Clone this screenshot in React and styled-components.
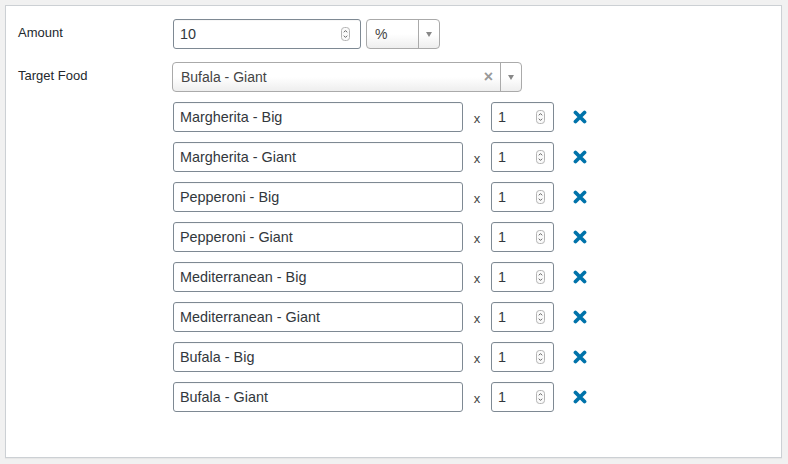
import React from "react";
import styled, { createGlobalStyle } from "styled-components";

const GlobalStyle = createGlobalStyle`
  html, body {
    margin: 0;
    padding: 0;
    background: #f1f1f1;
  }
  body {
    font-family: "Liberation Sans", Arial, sans-serif;
    font-size: 14px;
    color: #23282d;
  }
`;

const Page = styled.div`
  padding: 5px 6px 6px 5px;
`;

const Panel = styled.div`
  box-sizing: border-box;
  height: 453px;
  background: #fff;
  border: 1px solid #ccd0d4;
  box-shadow: 0 1px 1px rgba(0, 0, 0, 0.04);
  padding: 13px 12px;
`;

const FormRow = styled.div`
  display: grid;
  grid-template-columns: 155px 1fr;
  margin-bottom: ${(p) => p.$gap || 0}px;
`;

const Label = styled.div`
  padding-top: 5px;
  font-size: 13px;
  line-height: 18px;
  color: #23282d;
`;

const Fields = styled.div`
  display: flex;
  flex-direction: column;
  gap: 10px;
`;

const Inline = styled.div`
  display: flex;
  align-items: center;
  gap: ${(p) => p.$gap || 0}px;
`;

const InputBox = styled.div`
  box-sizing: border-box;
  width: ${(p) => p.$w}px;
  height: 30px;
  border: 1px solid #7e8993;
  border-radius: 3px;
  background: #fff;
  display: flex;
  align-items: center;
  padding: 0 ${(p) => p.$pr || 7}px 0 6px;
  font-size: 14.4px;
  color: #32373c;
  box-shadow: inset 0 1px 0 rgba(0, 0, 0, 0.03);
`;

const Value = styled.span`
  flex: 1;
  white-space: nowrap;
`;

const Spin = styled.svg`
  flex: none;
  width: 9px;
  height: 14px;
`;

const Select = styled.div`
  box-sizing: border-box;
  width: ${(p) => p.$w}px;
  height: 30px;
  margin-left: ${(p) => p.$shift || 0}px;
  border: 1px solid #aaa;
  border-radius: 4px;
  background: linear-gradient(to bottom, #fff 50%, #eee 100%);
  display: flex;
  align-items: stretch;
  font-size: 14px;
  color: #444;
`;

const SelectText = styled.span`
  flex: 1;
  display: flex;
  align-items: center;
  padding-left: 8px;
`;

const Clear = styled.span`
  display: flex;
  align-items: center;
  padding-right: 7px;
  font-size: 16px;
  font-weight: bold;
  color: #999;
`;

const Arrow = styled.span`
  flex: none;
  width: 20px;
  border-left: 1px solid #aaa;
  display: flex;
  align-items: center;
  justify-content: center;
  &::after {
    content: "";
    border-left: 3.5px solid transparent;
    border-right: 3.5px solid transparent;
    border-top: 5px solid #888;
  }
`;

const Times = styled.span`
  width: 28px;
  text-align: center;
  font-size: 13px;
  color: #444;
  padding-top: 2px;
`;

const Remove = styled.button`
  border: 0;
  background: none;
  padding: 0;
  margin-left: 19px;
  width: 14px;
  height: 14px;
  display: flex;
  cursor: pointer;
`;

const Spinner = () => (
  <Spin viewBox="0 0 9 14">
    <rect x="0.5" y="0.5" width="8" height="13" rx="3" fill="#fafafa" stroke="#b4b4b4" />
    <path d="M2.8 5.3 4.5 3.6 6.2 5.3M2.8 8.7 4.5 10.4 6.2 8.7" fill="none" stroke="#555" strokeWidth="0.9" />
  </Spin>
);

const RemoveIcon = () => (
  <svg width="14" height="14" viewBox="0 0 14 14">
    <path d="M2.5 2.5 11.5 11.5M11.5 2.5 2.5 11.5" stroke="#0073aa" strokeWidth="3.8" strokeLinecap="round" />
  </svg>
);

const items = [
  "Margherita - Big",
  "Margherita - Giant",
  "Pepperoni - Big",
  "Pepperoni - Giant",
  "Mediterranean - Big",
  "Mediterranean - Giant",
  "Bufala - Big",
  "Bufala - Giant",
];

export default function App() {
  return (
    <Page>
      <GlobalStyle />
      <Panel>
        <FormRow $gap={13}>
          <Label>Amount</Label>
          <Inline $gap={5}>
            <InputBox $w={188} $pr={10}>
              <Value>10</Value>
              <Spinner />
            </InputBox>
            <Select $w={74}>
              <SelectText>%</SelectText>
              <Arrow />
            </Select>
          </Inline>
        </FormRow>
        <FormRow>
          <Label>Target Food</Label>
          <Fields>
            <Select $w={350} $shift={-1}>
              <SelectText>Bufala - Giant</SelectText>
              <Clear>×</Clear>
              <Arrow />
            </Select>
            {items.map((name) => (
              <Inline key={name}>
                <InputBox $w={290}>
                  <Value>{name}</Value>
                </InputBox>
                <Times>x</Times>
                <InputBox $w={63} $pr={8}>
                  <Value>1</Value>
                  <Spinner />
                </InputBox>
                <Remove aria-label="Remove">
                  <RemoveIcon />
                </Remove>
              </Inline>
            ))}
          </Fields>
        </FormRow>
      </Panel>
    </Page>
  );
}
